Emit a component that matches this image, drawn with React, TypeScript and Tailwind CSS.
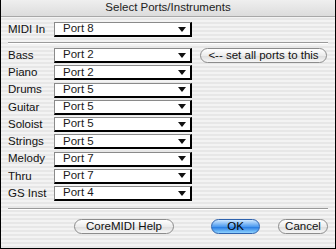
import React from "react";

const rows: [string, string][] = [
  ["Bass", "Port 2"],
  ["Piano", "Port 2"],
  ["Drums", "Port 5"],
  ["Guitar", "Port 5"],
  ["Soloist", "Port 5"],
  ["Strings", "Port 5"],
  ["Melody", "Port 7"],
  ["Thru", "Port 7"],
  ["GS Inst", "Port 4"],
];

const PopUp = ({ value }: { value: string }) => (
  <div className="flex items-center justify-between w-[138px] h-[15px] bg-white border-t border-l border-[#8a8a8a] border-r-2 border-b-2 border-r-black border-b-black pl-[8px] pr-[4px]">
    <span className="text-[11.5px] leading-none text-[#1a1a1a] whitespace-nowrap">{value}</span>
    <svg width="8" height="5" viewBox="0 0 8 5">
      <path d="M0 0H8L4 5Z" fill="#111" />
    </svg>
  </div>
);

const PillButton = ({
  children,
  className = "",
  blue = false,
}: {
  children: React.ReactNode;
  className?: string;
  blue?: boolean;
}) => (
  <div
    className={
      "flex items-center justify-center h-[15px] rounded-full text-[11.5px] leading-none whitespace-nowrap border " +
      (blue
        ? "bg-[linear-gradient(#cfe8ff,#4f9cf0_50%,#1f74e0_51%,#8dd2ff)] border-[#2f62ad] text-black "
        : "bg-[linear-gradient(#ffffff,#ececec_50%,#dcdcdc_51%,#f6f6f6)] border-[#8c8c8c] text-[#111] ") +
      className
    }
  >
    {children}
  </div>
);

export default function App() {
  return (
    <div
      className="w-[336px] h-[249px] flex flex-col border-x border-b border-black bg-[repeating-linear-gradient(#f3f3f3_0px,#f3f3f3_2px,#e7e7e7_2px,#e7e7e7_4px)]"
      style={{ fontFamily: '"Liberation Sans", Arial, sans-serif' }}
    >
      <div className="h-[17px] shrink-0 flex items-center justify-center text-[11.5px] leading-none text-[#222] bg-[linear-gradient(#efefef,#dcdcdc)] border-b border-[#a8a8a8]">
        Select Ports/Instruments
      </div>

      <div className="flex items-center h-[15px] pl-[7px] mt-[5px]">
        <span className="w-[46px] text-[11.5px] leading-none text-[#111]">MIDI In</span>
        <PopUp value="Port 8" />
      </div>

      <div className="mx-[7px] mt-[5px] h-[2px] shrink-0 border-t border-[#9a9a9a] border-b border-b-white" />

      <div className="flex mt-[4px] pl-[7px]">
        <div className="flex flex-col gap-[2.25px]">
          {rows.map(([label, value]) => (
            <div key={label} className="flex items-center h-[15px]">
              <span className="w-[46px] text-[11.5px] leading-none text-[#111]">{label}</span>
              <PopUp value={value} />
            </div>
          ))}
        </div>
        <PillButton className="ml-[8px] w-[127px] h-[14px]">
          &lt;-- set all ports to this
        </PillButton>
      </div>

      <div className="mx-[7px] mt-[7px] h-[2px] shrink-0 border-t border-[#9a9a9a] border-b border-b-white" />

      <div className="flex items-center mt-[9px] pl-[73px]">
        <PillButton className="w-[100px]">CoreMIDI Help</PillButton>
        <PillButton blue className="ml-[37px] w-[49px]">OK</PillButton>
        <PillButton className="ml-[18px] w-[50px]">Cancel</PillButton>
      </div>
    </div>
  );
}
